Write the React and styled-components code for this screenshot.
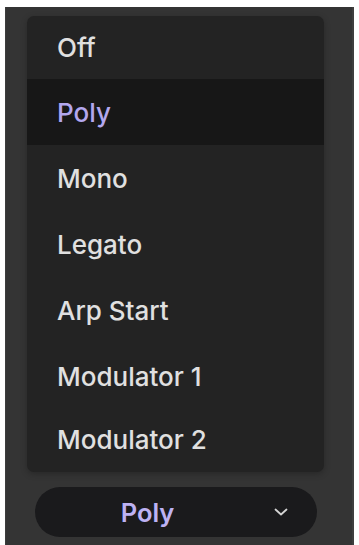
import React from "react";
import styled, { createGlobalStyle } from "styled-components";

const GlobalStyle = createGlobalStyle`
  html, body {
    margin: 0;
    padding: 0;
    background: #ffffff;
  }
  body {
    font-family: Inter, "Noto Sans", Arial, sans-serif;
  }
`;

const Panel = styled.div`
  box-sizing: border-box;
  width: 349px;
  height: 538px;
  margin: 7px 0 0 5px;
  padding: 9px 0 0 22px;
  background: #343434;
  border-left: 1px solid #3c3c3c;
  border-right: 2px solid #3e3e3e;
  display: flex;
  flex-direction: column;
  align-items: flex-start;
`;

const Menu = styled.ul`
  list-style: none;
  margin: 0 0 0 -1px;
  padding: 0;
  width: 297px;
  background: #232323;
  border-radius: 7px;
  overflow: hidden;
  box-shadow: 0 2px 6px rgba(0, 0, 0, 0.25);
`;

const Item = styled.li`
  height: 66px;
  display: flex;
  align-items: center;
  padding-left: 30px;
  font-size: 26px;
  font-weight: 500;
  color: ${(p) => (p.$active ? "#b3a7ee" : "#e0e0e0")};
  background: ${(p) => (p.$active ? "#171717" : "transparent")};

  &:first-child {
    height: 63px;
  }
  &:last-child {
    height: 61px;
    padding-bottom: 2px;
  }
`;

const Select = styled.div`
  box-sizing: border-box;
  margin: 15px 0 0 7px;
  width: 282px;
  height: 50px;
  border-radius: 25px;
  background: #1a1a1c;
  display: flex;
  align-items: center;
  padding-right: 29px;
`;

const Value = styled.span`
  flex: 1;
  text-align: center;
  font-size: 25.5px;
  font-weight: 600;
  color: #bdb2f3;
`;

const Chevron = styled.svg`
  margin-left: 14px;
  width: 14px;
  height: 8px;
  flex: none;
`;

const options = ["Off", "Poly", "Mono", "Legato", "Arp Start", "Modulator 1", "Modulator 2"];

export default function App() {
  const selected = "Poly";
  return (
    <>
      <GlobalStyle />
      <Panel>
        <Menu>
          {options.map((o) => (
            <Item key={o} $active={o === selected}>
              {o}
            </Item>
          ))}
        </Menu>
        <Select>
          <Value>{selected}</Value>
          <Chevron viewBox="0 0 14 8">
            <path d="M1.5 1.5 L7 6.5 L12.5 1.5" fill="none" stroke="#d4d4d4" strokeWidth="1.8" strokeLinecap="round" strokeLinejoin="round" />
          </Chevron>
        </Select>
      </Panel>
    </>
  );
}
